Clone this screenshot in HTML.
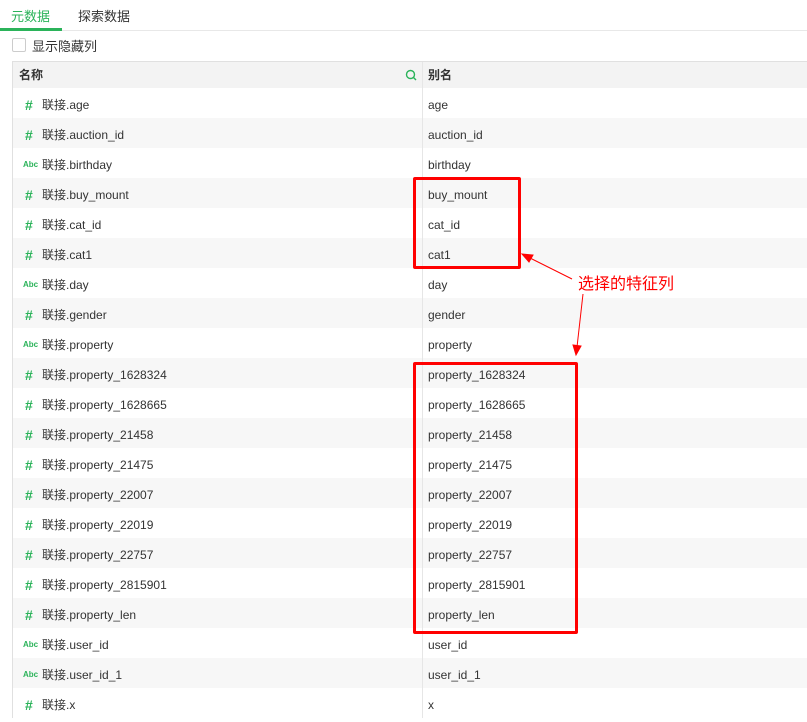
<!DOCTYPE html>
<html><head><meta charset="utf-8"><style>
body{margin:0;width:807px;height:694px;overflow:hidden;background:#fff;font-family:"Liberation Sans","Noto Sans CJK SC",sans-serif;font-size:12px;color:#333;position:relative}
.tabs{position:absolute;left:0;top:0;width:807px;height:30px;border-bottom:1px solid #e8e8e8}
.tab{position:absolute;top:6px;font-size:13px}
.ul{position:absolute;left:0;top:28px;width:62px;height:3px;background:#2bb35a}
.cb{position:absolute;left:12px;top:38px;width:12px;height:12px;border:1px solid #ccc;border-radius:2px}
.tbl{position:absolute;left:12px;top:61px;width:800px;border-left:1px solid #e0e0e0;border-top:1px solid #e0e0e0}
.row{height:30px;position:relative;line-height:34px}
.hd{height:26px;line-height:26px;background:#f3f3f3;font-weight:bold;position:relative}
.c1{position:absolute;left:29px}
.c2{position:absolute;left:415px}
.div{position:absolute;left:409px;top:0;bottom:0;border-left:1px solid #e6e6e6}
.ic{position:absolute;left:10px;color:#2bb35a;font-weight:bold}
.hash{font-size:14px;left:12px}
.abc{font-size:8px}
.box{position:absolute;border:3px solid #f00;border-radius:2px}
</style></head><body>
<div class="tabs"><span class="tab" style="left:11px;color:#2bb35a">元数据</span><span class="tab" style="left:78px">探索数据</span><div class="ul"></div></div>
<div class="cb"></div><span style="position:absolute;left:32px;top:36px;font-size:13px">显示隐藏列</span>
<div class="tbl">
<div class="hd"><span style="position:absolute;left:6px">名称</span>
<svg style="position:absolute;left:392px;top:7px" width="12" height="12" viewBox="0 0 12 12"><circle cx="5.5" cy="5.5" r="4" fill="none" stroke="#2bb35a" stroke-width="1.4"/><path d="M8.5 8.5L11 11" stroke="#2bb35a" stroke-width="1.4"/></svg>
<div class="div"></div><span style="position:absolute;left:415px">别名</span></div>
<div id="rows"></div>
</div>
<div class="box" style="left:413px;top:177px;width:102px;height:86px"></div>
<div class="box" style="left:413px;top:362px;width:159px;height:266px"></div>
<svg style="position:absolute;left:0;top:0" width="807" height="694"><g stroke="#f00" fill="#f00" stroke-width="1">
<line x1="572" y1="279" x2="528" y2="257"/><polygon points="522,254 533,255 529,262"/>
<line x1="583" y1="294" x2="577" y2="347"/><polygon points="576,355 573,345 581,346"/></g>
<text x="578" y="289" fill="#f00" font-size="16" font-family="Noto Sans CJK SC,sans-serif">选择的特征列</text></svg>
<script>
var d=[["#","age"],["#","auction_id"],["A","birthday"],["#","buy_mount"],["#","cat_id"],["#","cat1"],["A","day"],["#","gender"],["A","property"],["#","property_1628324"],["#","property_1628665"],["#","property_21458"],["#","property_21475"],["#","property_22007"],["#","property_22019"],["#","property_22757"],["#","property_2815901"],["#","property_len"],["A","user_id"],["A","user_id_1"],["#","x"]];
var h="";d.forEach(function(r,i){h+='<div class="row" style="background:'+(i%2?'#f7f7f7':'#fff')+'">'+(r[0]=="#"?'<span class="ic hash">#</span>':'<span class="ic abc">Abc</span>')+'<span class="c1">联接.'+r[1]+'</span><div class="div"></div><span class="c2">'+r[1]+'</span></div>'});
document.getElementById("rows").innerHTML=h;
</script>
</body></html>
